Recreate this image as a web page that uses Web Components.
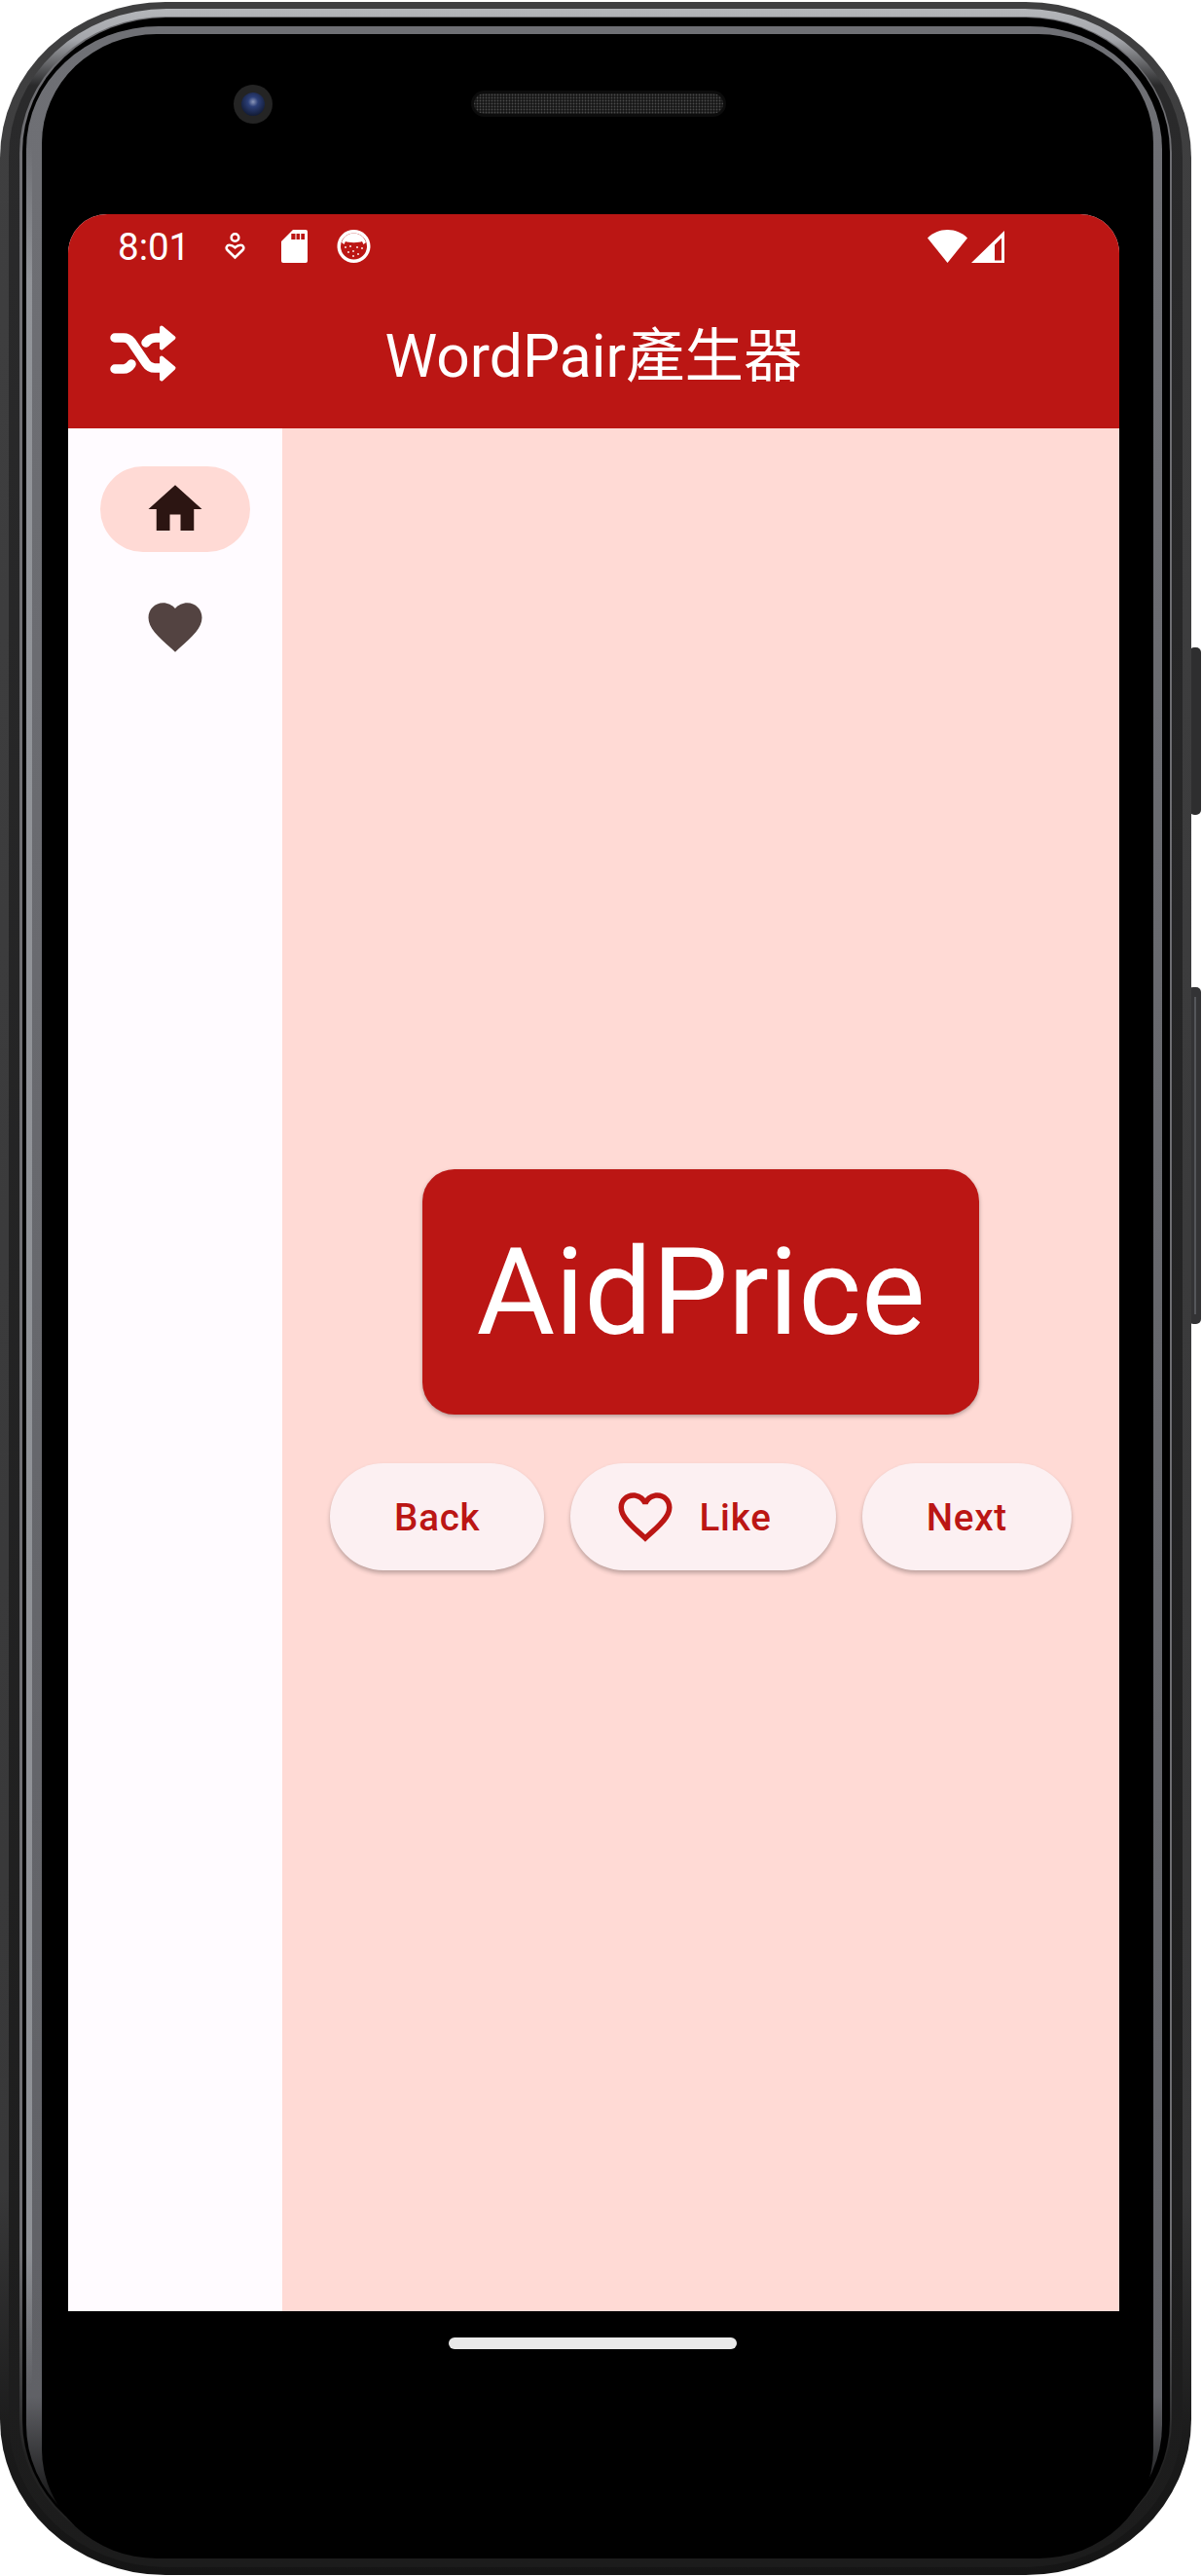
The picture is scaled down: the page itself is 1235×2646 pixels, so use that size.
<!DOCTYPE html>
<html>
<head>
<meta charset="utf-8">
<title>WordPair</title>
<style>
	html, body {
		margin: 0;
		background: #fff;
		font-family: Roboto, "Noto Sans CJK TC", sans-serif;
	}
</style>
</head>
<body>
<phone-frame>
	<status-bar></status-bar>
	<app-bar>WordPair產生器</app-bar>
	<div style="display: flex; height: 1934px;">
		<nav-rail></nav-rail>
		<word-page>
			<word-card>AidPrice</word-card>
			<div style="display: flex; gap: 27px; margin-top: 50px;">
				<action-button>Back</action-button>
				<action-button icon>Like</action-button>
				<action-button>Next</action-button>
			</div>
		</word-page>
	</div>
</phone-frame>

<script>
class PhoneFrame extends HTMLElement {
	constructor() {
		super();
		this.attachShadow({ mode: "open" });
		this.shadowRoot.innerHTML = `
<style>
	:host {
		display: block;
		position: relative;
		width: 1235px;
		height: 2646px;
		box-sizing: border-box;
		padding: 220px 0 0 70px;
		overflow: hidden;
	}
	#bezel {
		position: absolute;
		left: 0;
		top: 0;
	}
	#screen {
		position: relative;
		width: 1080px;
		height: 2154px;
		border-radius: 40px 40px 0 0;
		overflow: hidden;
		background: #fffbff;
	}
	#home {
		position: relative;
		width: 296px;
		height: 12px;
		margin: 27px 0 0 391px;
		border-radius: 6px;
		background: #e9e9e9;
	}
</style>
<svg id="bezel" width="1235" height="2646" viewBox="0 0 1235 2646">
	<defs>
		<linearGradient id="shell" x1="0" y1="0" x2="0" y2="1">
			<stop offset="0" stop-color="#3f3f40"/>
			<stop offset="0.85" stop-color="#383839"/>
			<stop offset="0.95" stop-color="#1a1a1a"/>
			<stop offset="1" stop-color="#151515"/>
		</linearGradient>
		<linearGradient id="rim" x1="0" y1="0" x2="0" y2="1">
			<stop offset="0" stop-color="#b4b6ba"/>
			<stop offset="0.012" stop-color="#a4a6ab"/>
			<stop offset="0.03" stop-color="#2a2a2b"/>
			<stop offset="1" stop-color="#1c1c1c"/>
		</linearGradient>
		<linearGradient id="line" x1="0" y1="0" x2="0" y2="1">
			<stop offset="0" stop-color="#6e6e72"/>
			<stop offset="0.88" stop-color="#6e6e72"/>
			<stop offset="0.96" stop-color="#222"/>
		</linearGradient>
		<linearGradient id="band" x1="0" y1="0" x2="0" y2="1">
			<stop offset="0" stop-color="#6f7075"/>
			<stop offset="0.94" stop-color="#606166"/>
			<stop offset="0.985" stop-color="#111"/>
		</linearGradient>
		<linearGradient id="shine" x1="0" y1="0" x2="0" y2="1">
			<stop offset="0" stop-color="#9a9da2" stop-opacity="0"/>
			<stop offset="0.06" stop-color="#9a9da2" stop-opacity="0.8"/>
			<stop offset="0.94" stop-color="#9a9da2" stop-opacity="0.8"/>
			<stop offset="1" stop-color="#9a9da2" stop-opacity="0"/>
		</linearGradient>
		<pattern id="mesh" width="3" height="3" patternUnits="userSpaceOnUse">
			<rect width="3" height="3" fill="#161616"/>
			<circle cx="1.500" cy="1.500" r="0.9" fill="#4a4a4a"/>
		</pattern>
		<radialGradient id="lens" cx="0.5" cy="0.4" r="0.6">
			<stop offset="0" stop-color="#8b96b8"/>
			<stop offset="0.35" stop-color="#2c3f78"/>
			<stop offset="1" stop-color="#121b35"/>
		</radialGradient>
	</defs>
	<rect x="1222" y="665" width="12" height="172" rx="5" fill="#2e2e2f"/>
	<rect x="1221" y="1014" width="13" height="346" rx="5" fill="#333335"/>
	<rect x="1227" y="1024" width="2" height="326" fill="#55565a"/>
	<rect x="0" y="2" width="1224" height="2643" rx="170" ry="160" fill="url(#shell)"/>
	<rect x="9" y="9" width="1206" height="2628" rx="162" ry="152" fill="url(#rim)"/>
	<rect x="20" y="17" width="1184" height="2608" rx="150" ry="140" fill="url(#line)"/>
	<rect x="23" y="18" width="1179" height="2606" rx="148" ry="138" fill="#000"/>
	<rect x="27" y="27" width="1167" height="2590" rx="136" ry="126" fill="url(#band)"/>
	<rect x="27" y="150" width="6" height="2300" fill="url(#shine)"/>
	<rect x="43" y="35" width="1142" height="2593" rx="118" ry="112" fill="#000"/>
	<circle cx="260" cy="107" r="20" fill="#242424"/>
	<circle cx="260" cy="107" r="12" fill="url(#lens)"/>
	<rect x="484" y="93" width="262" height="27" rx="13.500" fill="#0c0c0c"/>
	<rect x="487" y="96" width="256" height="21" rx="10.500" fill="url(#mesh)"/>
</svg>
<div id="screen"><slot></slot></div>
<div id="home"></div>
`;
	}
}

class StatusBar extends HTMLElement {
	constructor() {
		super();
		this.attachShadow({ mode: "open" });
		this.shadowRoot.innerHTML = `
<style>
	:host {
		display: flex;
		align-items: center;
		height: 66px;
		box-sizing: border-box;
		padding: 0 118px 0 51px;
		background: #bb1614;
		color: #fff;
		font: 400 38.5px/66px Roboto, sans-serif;
	}
	svg {
		display: block;
		flex: none;
	}
	#time { width: 69px; margin-right: 41px; padding-top: 2px; white-space: nowrap; }
	#spacer { flex: 1; }
</style>
<span id="time">8:01</span>
<svg width="21" height="30" viewBox="0 0 21 30" fill="none" stroke="#fff" stroke-width="2.6" style="margin-right:37px">
	<circle cx="10.500" cy="6" r="3.800"/>
	<path d="M10.500 26.500L2.600 18.800c-2-2.300-.4-5 2-5 2 0 4.500 1.300 5.900 2.500 1.400-1.200 3.900-2.500 5.900-2.500 2.400 0 4 2.700 2 5z" stroke-linejoin="miter"/>
</svg>
<svg width="27" height="34" viewBox="0 0 27 34" style="margin-right:30px">
	<path fill="#fff" d="M12 0H25a2 2 0 0 1 2 2V32a2 2 0 0 1-2 2H2a2 2 0 0 1-2-2V12z"/>
	<path fill="#bb1614" d="M10.300 4h4.200v6h-4.200zM15.500 4h3.500v6h-3.500zM20.300 4h3.700v6h-3.700z"/>
</svg>
<svg width="35" height="34" viewBox="0 0 35 34">
	<circle cx="17.500" cy="17" r="17" fill="#fff"/>
	<circle cx="17.500" cy="17" r="13.500" fill="#bb1614"/>
	<path fill="#fff" d="M5 13c2-6 7-9.500 12.500-9.500S28 7 30 13l-2.500 2-1.500-3c-3 1.500-14 1.500-17 0l-1.500 3z"/>
	<g fill="#fff">
		<circle cx="9" cy="18" r=".9"/><circle cx="14" cy="17" r=".9"/><circle cx="21" cy="18" r=".9"/>
		<circle cx="26" cy="19" r=".9"/><circle cx="12" cy="23" r=".9"/><circle cx="17" cy="22" r=".9"/>
		<circle cx="22" cy="25" r=".9"/><circle cx="17" cy="27" r=".9"/>
	</g>
</svg>
<div id="spacer"></div>
<svg width="41" height="34" viewBox="0 0 41 34" style="margin-right:4px">
	<path fill="#fff" d="M20.500 34L0 8.500C5.500 3 12.500 0 20.500 0S35.500 3 41 8.500z"/>
</svg>
<svg width="34" height="33" viewBox="0 0 34 33">
	<path fill="#fff" fill-rule="evenodd" d="M34 0V33H0zM31 7.500L24 14.500V30.500H31z"/>
</svg>
`;
	}
}

class AppBar extends HTMLElement {
	constructor() {
		super();
		this.attachShadow({ mode: "open" });
		this.shadowRoot.innerHTML = `
<style>
	:host {
		display: grid;
		grid-template-columns: 154px 1fr 154px;
		align-items: center;
		height: 154px;
		background: #bb1614;
		color: #fff;
		font: 400 60.5px/1 Roboto, "Noto Sans CJK TC", sans-serif;
	}
	svg {
		display: block;
		margin-left: 42px;
	}
	#title {
		padding-top: 9px;
		text-align: center;
		white-space: nowrap;
	}
</style>
<svg width="70" height="63" viewBox="112 332 70 63" fill="none">
	<g stroke="#fff" stroke-width="9.500" stroke-linecap="round" stroke-linejoin="round">
		<path d="M118 347h9c4 0 6 1.500 8 4l15 22c2 3 5 5 9 5h8"/>
		<path d="M150 352c2.500-3.500 6-5 10-5h7"/>
		<path d="M118 379h9c4 0 6-2 8-5"/>
	</g>
	<path fill="#fff" stroke="#fff" stroke-width="4" stroke-linejoin="round" d="M166 336.500l12.500 10.500-12.500 10.500zM166 367.500l12.500 10.500-12.500 11.500z"/>
</svg>
<div id="title"><slot></slot></div>
<div></div>
`;
	}
}

class NavRail extends HTMLElement {
	constructor() {
		super();
		this.attachShadow({ mode: "open" });
		this.shadowRoot.innerHTML = `
<style>
	:host {
		display: flex;
		flex-direction: column;
		align-items: center;
		flex: none;
		width: 220px;
		box-sizing: border-box;
		padding-top: 39px;
		background: #fffbff;
	}
	#pill {
		display: flex;
		justify-content: center;
		align-items: center;
		width: 154px;
		height: 88px;
		border-radius: 44px;
		background: #ffdad5;
	}
	#fav {
		margin-top: 44px;
	}
	svg {
		display: block;
	}
</style>
<div id="pill">
	<svg width="66" height="66" viewBox="0 0 24 24"><path fill="#2c1512" d="M10 20v-6h4v6h5v-8h3L12 3 2 12h3v8z"/></svg>
</div>
<svg id="fav" width="66" height="66" viewBox="0 0 24 24"><path fill="#534341" d="M12 21.350l-1.450-1.320C5.400 15.360 2 12.280 2 8.500 2 5.420 4.420 3 7.500 3c1.740 0 3.410.81 4.500 2.090C13.090 3.810 14.760 3 16.500 3 19.580 3 22 5.420 22 8.500c0 3.780-3.400 6.860-8.550 11.540L12 21.350z"/></svg>
`;
	}
}

class WordPage extends HTMLElement {
	constructor() {
		super();
		this.attachShadow({ mode: "open" });
		this.shadowRoot.innerHTML = `
<style>
	:host {
		display: flex;
		flex-direction: column;
		justify-content: center;
		align-items: center;
		flex: 1;
		background: #ffdad5;
	}
</style>
<slot></slot>
`;
	}
}

class WordCard extends HTMLElement {
	constructor() {
		super();
		this.attachShadow({ mode: "open" });
		this.shadowRoot.innerHTML = `
<style>
	:host {
		display: block;
		box-sizing: border-box;
		height: 252px;
		padding: 55px;
		border-radius: 33px;
		background: #bb1614;
		box-shadow: 0 2px 4px rgba(0, 0, 0, 0.3);
		color: #fff;
		font: 400 123.75px/143px Roboto, sans-serif;
		white-space: nowrap;
	}
</style>
<slot></slot>
`;
	}
}

class ActionButton extends HTMLElement {
	constructor() {
		super();
		this.attachShadow({ mode: "open" });
		this.shadowRoot.innerHTML = `
<style>
	:host {
		display: flex;
		align-items: center;
		gap: 22px;
		height: 110px;
		box-sizing: border-box;
		padding: 2px 66px 0;
		border-radius: 55px;
		background: #fcf0f2;
		box-shadow: 0 3px 4px rgba(0, 0, 0, 0.25);
		color: #bb1614;
		font: 500 38.5px/1 Roboto, sans-serif;
		letter-spacing: 0.8px;
		white-space: nowrap;
	}
	:host([icon]) {
		padding-left: 44px;
	}
	svg {
		display: none;
		margin-top: -2px;
	}
	:host([icon]) svg {
		display: block;
	}
</style>
<svg width="66" height="66" viewBox="0 0 24 24"><path fill="#bb1614" d="M16.500 3c-1.740 0-3.410.81-4.500 2.090C10.910 3.810 9.240 3 7.500 3 4.420 3 2 5.420 2 8.500c0 3.780 3.400 6.860 8.550 11.540L12 21.350l1.450-1.320C18.600 15.360 22 12.280 22 8.500 22 5.420 19.580 3 16.500 3zm-4.400 15.550l-.1.100-.1-.1C7.140 14.240 4 11.390 4 8.500 4 6.500 5.500 5 7.500 5c1.540 0 3.040.99 3.570 2.360h1.870C13.460 5.990 14.960 5 16.500 5c2 0 3.500 1.500 3.500 3.500 0 2.890-3.140 5.740-7.900 10.050z"/></svg>
<slot></slot>
`;
	}
}

customElements.define("phone-frame", PhoneFrame);
customElements.define("status-bar", StatusBar);
customElements.define("app-bar", AppBar);
customElements.define("nav-rail", NavRail);
customElements.define("word-page", WordPage);
customElements.define("word-card", WordCard);
customElements.define("action-button", ActionButton);
</script>
</body>
</html>
